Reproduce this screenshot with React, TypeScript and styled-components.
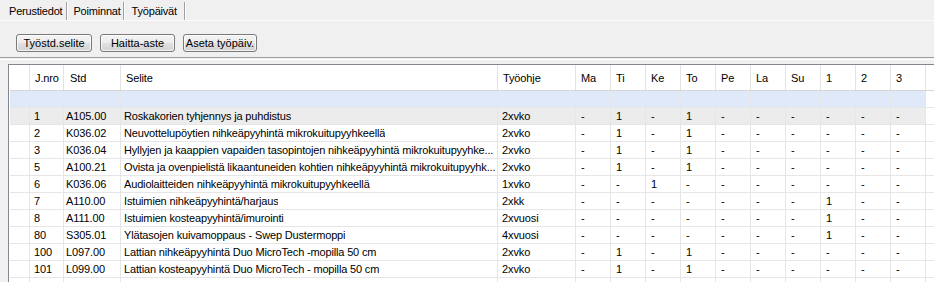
import React from "react";
import styled, { createGlobalStyle } from "styled-components";

const GlobalStyle = createGlobalStyle`
  html, body {
    margin: 0;
    padding: 0;
    overflow: hidden;
    background: #f0f0f0;
  }
  body {
    font-family: "Liberation Sans", Arial, sans-serif;
    font-size: 11px;
    color: #000;
  }
`;

const columns = "20px 34px 57px 377px 78px repeat(10, 35px) 1fr";

const Window = styled.div`
  width: 934px;
  height: 282px;
  background: #f0f0f0;
  overflow: hidden;
`;

const TabStrip = styled.div`
  display: flex;
  height: 20px;
  padding-left: 2px;
  border-bottom: 1px solid #fbfbfb;
`;

const Tab = styled.div<{ $padL: number; $padR: number }>`
  display: flex;
  align-items: center;
  height: 18px;
  margin-top: 2px;
  padding: 0 ${({ $padR }) => $padR}px 0 ${({ $padL }) => $padL}px;
  border-right: 1px solid #a0a0a0;
  box-shadow: 1px 0 0 #ffffff;
  white-space: nowrap;
  letter-spacing: -0.2px;
`;

const Toolbar = styled.div`
  display: flex;
  gap: 8px;
  padding: 13px 0 0 16px;
  height: 18px;
`;

const Button = styled.button<{ $width: number }>`
  width: ${({ $width }) => $width}px;
  height: 18px;
  padding: 0;
  border: 1px solid #7a7a7a;
  border-radius: 3px;
  background: linear-gradient(#f4f4f4 0%, #ececec 50%, #e0e0e0 51%, #d4d4d4 100%);
  box-shadow: inset 0 0 0 1px rgba(255, 255, 255, 0.7);
  font-family: inherit;
  font-size: 11px;
  color: #000;
`;

const Divider = styled.div`
  margin-top: 5px;
  height: 1px;
  border-top: 1px solid #a0a0a0;
  border-bottom: 1px solid #ffffff;
`;

const Grid = styled.div`
  margin: 4px 0 0 8px;
  width: 940px;
  background: #ffffff;
  border-top: 1px solid #828790;
  border-left: 1px solid #828790;
  padding: 0 0 0 1px;
`;

const Row = styled.div<{ $kind?: "header" | "new" | "current" | "normal" }>`
  display: grid;
  grid-template-columns: ${columns};
  height: ${({ $kind }) => ($kind === "header" ? 25 : 16)}px;
  border-bottom: 1px solid ${({ $kind }) => ($kind === "header" ? "#d5d5d5" : "#e6e6e6")};
  background: ${({ $kind }) =>
    $kind === "new" ? "#dfe9f9" : $kind === "current" ? "#ececec" : "#ffffff"};
`;

const Cell = styled.div<{ $pad?: number; $header?: boolean }>`
  display: flex;
  align-items: center;
  padding-left: ${({ $pad }) => $pad ?? 4}px;
  border-right: 1px solid ${({ $header }) => ($header ? "#e3e3e3" : "#e6e6e6")};
  white-space: nowrap;
  overflow: hidden;
  letter-spacing: -0.12px;
  color: #000;
`;

const Text = styled.span`
  overflow: hidden;
  text-overflow: ellipsis;
  white-space: nowrap;
  letter-spacing: -0.16px;
`;

const Filler = styled.div`
  background: #ffffff;
`;

const headers = ["J.nro", "Std", "Selite", "Työohje", "Ma", "Ti", "Ke", "To", "Pe", "La", "Su", "1", "2", "3"];

type Item = [string, string, string, string, string];

// days: Ma Ti Ke To Pe La Su 1 2 3
const items: Item[] = [
  ["1", "A105.00", "Roskakorien tyhjennys ja puhdistus", "2xvko", "-1-1------"],
  ["2", "K036.02", "Neuvottelupöytien nihkeäpyyhintä mikrokuitupyyhkeellä", "2xvko", "-1-1------"],
  ["3", "K036.04", "Hyllyjen ja kaappien vapaiden tasopintojen nihkeäpyyhintä mikrokuitupyyhke...", "2xvko", "-1-1------"],
  ["5", "A100.21", "Ovista ja ovenpielistä likaantuneiden kohtien nihkeäpyyhintä mikrokuitupyyhk...", "2xvko", "-1-1------"],
  ["6", "K036.06", "Audiolaitteiden nihkeäpyyhintä mikrokuitupyyhkeellä", "1xvko", "--1-------"],
  ["7", "A110.00", "Istuimien nihkeäpyyhintä/harjaus", "2xkk", "-------1--"],
  ["8", "A111.00", "Istuimien kosteapyyhintä/imurointi", "2xvuosi", "-------1--"],
  ["80", "S305.01", "Ylätasojen kuivamoppaus - Swep Dustermoppi", "4xvuosi", "-------1--"],
  ["100", "L097.00", "Lattian nihkeäpyyhintä Duo MicroTech -mopilla 50 cm", "2xvko", "-1-1------"],
  ["101", "L099.00", "Lattian kosteapyyhintä Duo MicroTech - mopilla 50 cm", "2xvko", "-1-1------"],
];

function DataRow({ item, kind }: { item: Item; kind: "current" | "normal" }) {
  const [nro, std, selite, ohje, days] = item;
  return (
    <Row $kind={kind}>
      <Cell />
      <Cell $pad={4}>{nro}</Cell>
      <Cell $pad={2}>{std}</Cell>
      <Cell $pad={3}>
        <Text>{selite}</Text>
      </Cell>
      <Cell $pad={4}>{ohje}</Cell>
      {days.split("").map((d, i) => (
        <Cell key={i} $pad={5}>
          {d}
        </Cell>
      ))}
      <Filler />
    </Row>
  );
}

function EmptyRow({ kind }: { kind: "new" | "normal" }) {
  return (
    <Row $kind={kind}>
      {Array.from({ length: 15 }).map((_, i) => (
        <Cell key={i} />
      ))}
      <Filler />
    </Row>
  );
}

export default function App() {
  return (
    <Window>
      <GlobalStyle />
      <TabStrip>
        <Tab $padL={7} $padR={4}>Perustiedot</Tab>
        <Tab $padL={6} $padR={2}>Poiminnat</Tab>
        <Tab $padL={8} $padR={7}>Työpäivät</Tab>
      </TabStrip>
      <Toolbar>
        <Button $width={76}>Työstd.selite</Button>
        <Button $width={75}>Haitta-aste</Button>
        <Button $width={74}>Aseta työpäiv.</Button>
      </Toolbar>
      <Divider />
      <Grid>
        <Row $kind="header">
          <Cell $header />
          {headers.map((h, i) => (
            <Cell key={h + i} $header $pad={i === 1 ? 6 : 5}>
              {h}
            </Cell>
          ))}
          <Filler />
        </Row>
        <EmptyRow kind="new" />
        {items.map((it, i) => (
          <DataRow key={it[0]} item={it} kind={i === 0 ? "current" : "normal"} />
        ))}
        <EmptyRow kind="normal" />
      </Grid>
    </Window>
  );
}
